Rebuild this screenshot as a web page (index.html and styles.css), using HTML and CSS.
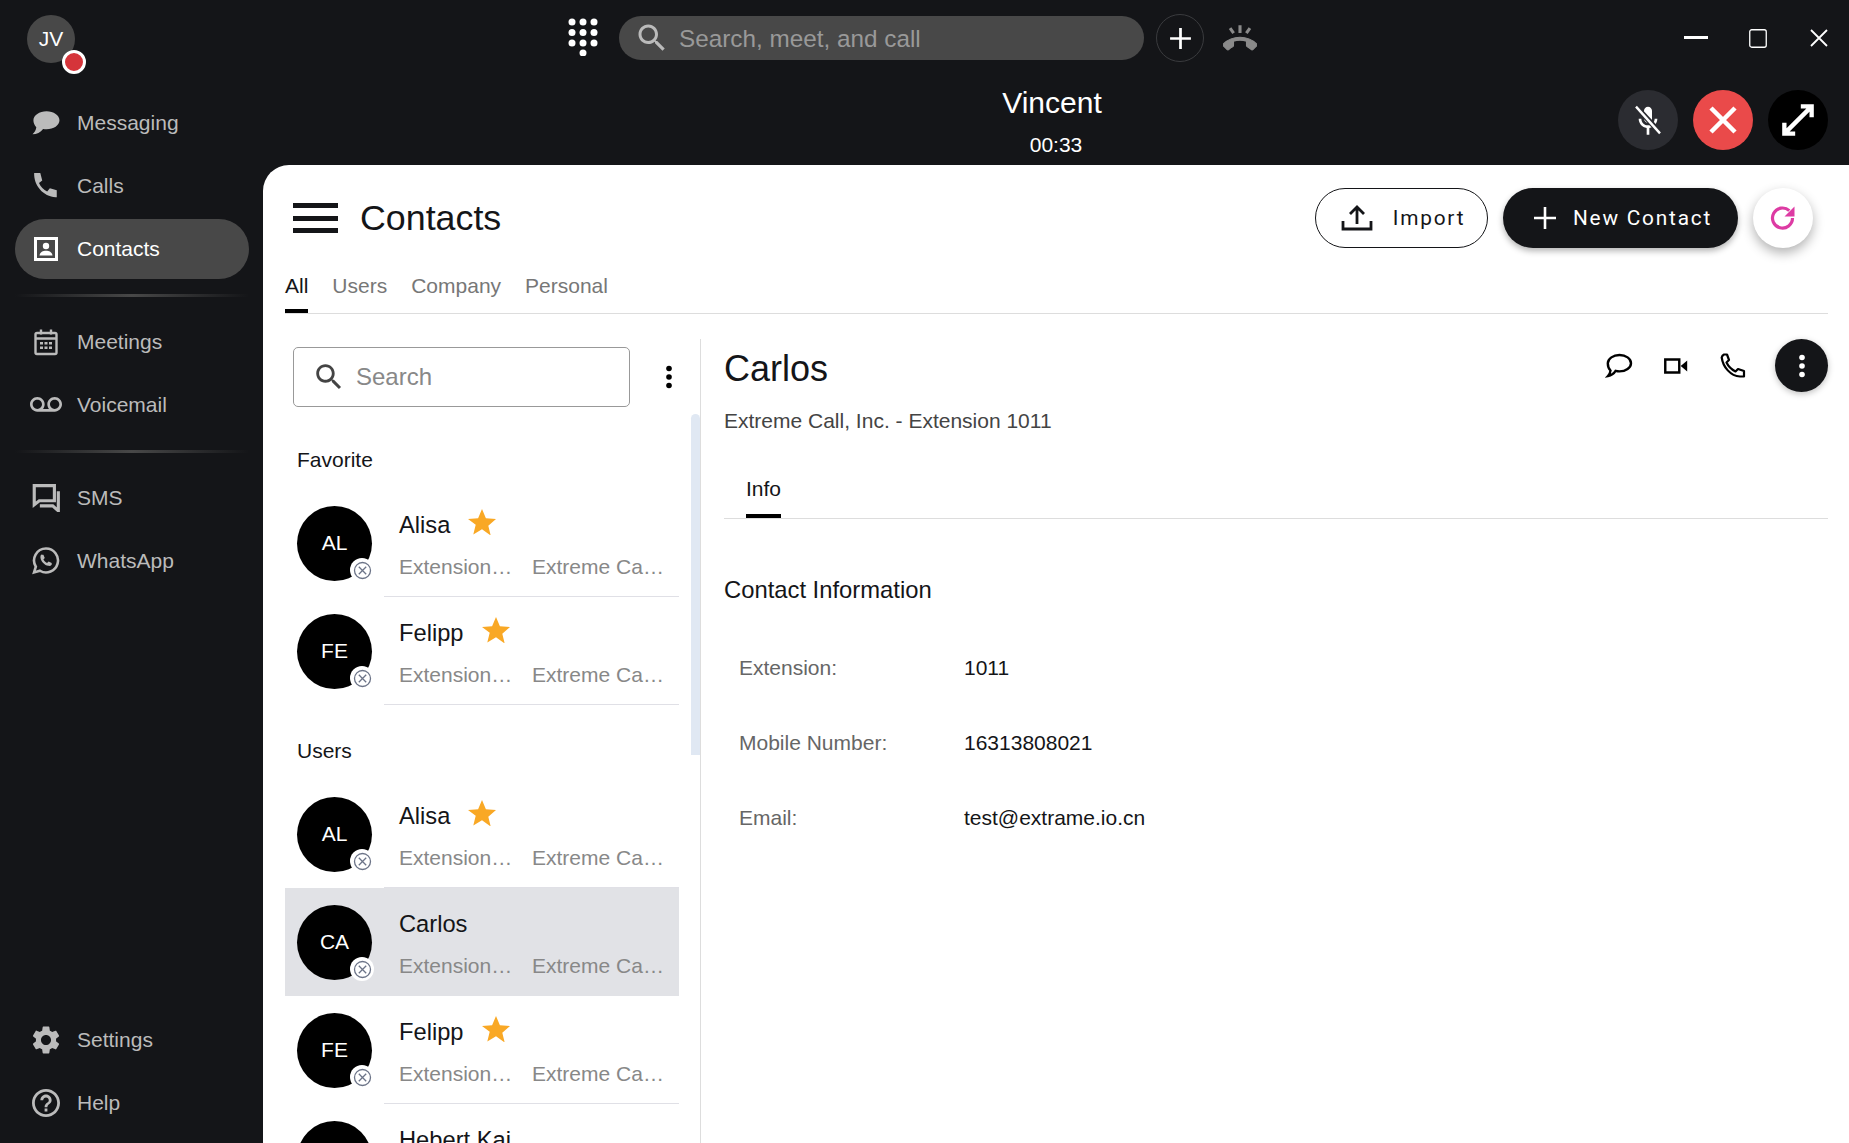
FILE: index.html
```html
<!DOCTYPE html>
<html lang="en">
<head>
<meta charset="UTF-8">
<meta name="viewport" content="width=device-width, initial-scale=1.0">
<title>Contacts</title>
<link rel="stylesheet" href="styles.css">
</head>
<body>
<svg class="sprite" xmlns="http://www.w3.org/2000/svg">
<symbol id="i-star" viewBox="0 0 28 26"><path d="M14 0l3.900 9.300 10.100.8-7.700 6.600 2.400 9.800L14 20.300l-8.700 5.200 2.400-9.800L0 10.100l10.100-.8z"/></symbol>
<symbol id="i-gone" viewBox="0 0 24 24"><circle cx="12" cy="12" r="12" fill="#fff"/><circle cx="12.500" cy="12.500" r="8" fill="#fff" stroke="#6c7488" stroke-width="1.300"/><path d="M8.800 8.800l7.400 7.400M16.200 8.800l-7.400 7.400" stroke="#6c7488" stroke-width="1.300"/></symbol>
<symbol id="i-search" viewBox="0 0 24 24"><path d="M15.500 14h-.79l-.28-.27C15.410 12.590 16 11.110 16 9.500 16 5.910 13.090 3 9.500 3S3 5.910 3 9.500 5.910 16 9.500 16c1.610 0 3.090-.59 4.230-1.570l.27.28v.79l5 4.990L20.490 19l-4.990-5zm-6 0C7.010 14 5 11.990 5 9.500S7.010 5 9.500 5 14 7.010 14 9.500 11.990 14 9.500 14z"/></symbol>
<symbol id="i-dots" viewBox="0 0 6 24"><circle cx="3" cy="3.500" r="2.800"/><circle cx="3" cy="12" r="2.800"/><circle cx="3" cy="20.500" r="2.800"/></symbol>
</svg>

<aside class="sidebar">
<div class="me">
<span class="me-initials">JV</span>
<span class="me-status"></span>
</div>
<nav class="nav-group nav-first">
<a class="nav-item"><svg viewBox="1.500 1.500 26 26"><path d="M15 3.500c6.600 0 12 3.700 12 8.400 0 4.600-5.400 8.400-12 8.400-1.100 0-2.200-.1-3.200-.3C9.500 23 5.800 25 2 25c1.700-1.500 3.300-3.900 3.500-6.500C3.900 16.800 2.800 14.500 2.800 12c0-4.700 5.600-8.500 12.200-8.500z" fill="currentColor"/></svg>Messaging</a>
<a class="nav-item"><svg viewBox="1.500 1.500 26 26"><path d="M3.500 2.500h5.700l1.800 6.800-3 2.500c1.500 3.400 4.300 6.300 7.600 7.700l2.500-3 6.400 1.900v6.600h-1C12 24.500 3 14 3.500 2.500z" fill="currentColor"/></svg>Calls</a>
<a class="nav-item nav-active"><svg viewBox="0 0 28 28"><rect x="3.500" y="3.500" width="21" height="21" fill="none" stroke="currentColor" stroke-width="3"/><circle cx="14" cy="11" r="3.200" fill="currentColor"/><path d="M7.500 20.500c.5-3.300 3.500-4.700 6.500-4.700s6 1.400 6.500 4.700z" fill="currentColor"/></svg>Contacts</a>
</nav>
<hr class="nav-line">
<nav class="nav-group">
<a class="nav-item"><svg viewBox="0 0 28 28"><rect x="3.500" y="5" width="21" height="21" rx="1.500" fill="none" stroke="currentColor" stroke-width="2.400"/><path d="M3.500 10.500h21M9 1.500v5M19 1.500v5" stroke="currentColor" stroke-width="2.400"/><path d="M8 14h3v2.500H8zM12.500 14h3v2.500h-3zM17 14h3v2.500h-3zM8 18.500h3V21H8zM12.500 18.500h3V21h-3zM17 18.500h3V21h-3z" fill="currentColor"/></svg>Meetings</a>
<a class="nav-item"><svg class="voicemail" viewBox="0 0 24 24"><path fill="currentColor" d="M18.500 6C15.460 6 13 8.460 13 11.500c0 1.330.47 2.550 1.260 3.500H9.740c.79-.95 1.260-2.170 1.260-3.500C11 8.460 8.540 6 5.500 6S0 8.460 0 11.500 2.460 17 5.500 17h13c3.040 0 5.500-2.460 5.500-5.500S21.540 6 18.500 6zm-13 9C3.570 15 2 13.430 2 11.500S3.570 8 5.500 8 9 9.570 9 11.500 7.430 15 5.500 15zm13 0c-1.930 0-3.500-1.570-3.500-3.500S16.570 8 18.500 8 22 9.570 22 11.500 20.430 15 18.500 15z"/></svg>Voicemail</a>
</nav>
<hr class="nav-line">
<nav class="nav-group">
<a class="nav-item"><svg viewBox="2 2 24 25"><path d="M3.500 3.500h18v13.500H8l-4.500 3.500z" fill="none" stroke="currentColor" stroke-width="2.800"/><path d="M25 8.500V26l-5-4.500H8.500" fill="none" stroke="currentColor" stroke-width="2.800"/></svg>SMS</a>
<a class="nav-item"><svg viewBox="1 1 27 27"><path d="M14.500 2.500a11.500 11.500 0 1 1-5.800 21.400L3 25.500l1.700-5.500A11.500 11.500 0 0 1 14.500 2.500z" fill="none" stroke="currentColor" stroke-width="2.500"/><path d="M10 8.500h2l1.300 3-1.300 1.500c.8 1.500 1.900 2.600 3.500 3.400l1.500-1.400 3 1.400v1.700c-.8 1-2 1.400-3.300 1.100-3.700-.9-6.800-3.900-7.500-7.700-.2-1.300.1-2.500.8-3.500z" fill="currentColor"/></svg>WhatsApp</a>
</nav>
<nav class="nav-group nav-bottom">
<a class="nav-item"><svg viewBox="2 2 20 20"><path fill="currentColor" d="M19.140 12.940c.04-.3.06-.61.06-.94 0-.32-.02-.64-.07-.94l2.030-1.580c.18-.14.23-.41.12-.61l-1.920-3.320c-.12-.22-.37-.29-.59-.22l-2.390.96c-.5-.38-1.030-.7-1.620-.94l-.36-2.540c-.04-.24-.24-.41-.48-.41h-3.840c-.24 0-.43.17-.47.41l-.36 2.540c-.59.24-1.130.57-1.620.94l-2.390-.96c-.22-.08-.47 0-.59.22L2.740 8.870c-.12.21-.08.47.12.61l2.030 1.580c-.05.3-.09.63-.09.94s.02.64.07.94l-2.030 1.580c-.18.14-.23.41-.12.61l1.920 3.320c.12.22.37.29.59.22l2.390-.96c.5.38 1.030.7 1.620.94l.36 2.540c.05.24.24.41.48.41h3.840c.24 0 .44-.17.47-.41l.36-2.540c.59-.24 1.130-.56 1.620-.94l2.390.96c.22.08.47 0 .59-.22l1.920-3.320c.12-.22.07-.47-.12-.61l-2.010-1.580zM12 15.600c-1.980 0-3.600-1.620-3.600-3.600s1.620-3.600 3.600-3.600 3.600 1.620 3.600 3.600-1.620 3.600-3.600 3.600z"/></svg>Settings</a>
<a class="nav-item"><svg viewBox="2 2 20 20"><path fill="currentColor" d="M11 18h2v-2h-2v2zm1-16C6.480 2 2 6.480 2 12s4.480 10 10 10 10-4.480 10-10S17.520 2 12 2zm0 18c-4.410 0-8-3.590-8-8s3.590-8 8-8 8 3.590 8 8-3.590 8-8 8zm0-14c-2.210 0-4 1.790-4 4h2c0-1.100.9-2 2-2s2 .9 2 2c0 2-3 1.750-3 5h2c0-2.250 3-2.500 3-5 0-2.210-1.790-4-4-4z"/></svg>Help</a>
</nav>
</aside>

<main class="main">
<header class="topbar">
<div class="tools">
<svg class="dialpad" viewBox="0 0 30 38"><g fill="#fff"><circle cx="4" cy="4" r="3.500"/><circle cx="15" cy="4" r="3.500"/><circle cx="26" cy="4" r="3.500"/><circle cx="4" cy="14.500" r="3.500"/><circle cx="15" cy="14.500" r="3.500"/><circle cx="26" cy="14.500" r="3.500"/><circle cx="4" cy="25" r="3.500"/><circle cx="15" cy="25" r="3.500"/><circle cx="26" cy="25" r="3.500"/><circle cx="15" cy="35" r="3.500"/></g></svg>
<div class="global-search">
<svg class="global-search-icon"><use href="#i-search"/></svg>
<span class="global-search-text">Search, meet, and call</span>
</div>
<button class="round-add"><svg viewBox="0 0 24 24"><path d="M12 2v20M2 12h20" stroke="#fff" stroke-width="2.600"/></svg></button>
<svg class="hangup-ring" viewBox="0 0 24 18"><path transform="translate(0 1.500)" fill="#8a8a8a" stroke="#8a8a8a" stroke-width=".8" d="M12 9c-1.600 0-3.150.25-4.600.72v3.100c0 .39-.23.74-.56.9-.98.49-1.870 1.120-2.660 1.850-.18.18-.43.28-.7.28-.28 0-.53-.11-.71-.29L.29 13.080c-.18-.17-.29-.42-.29-.7 0-.28.11-.53.29-.71C3.340 8.780 7.460 7 12 7s8.660 1.780 11.710 4.670c.18.18.29.43.29.71 0 .28-.11.53-.29.71l-2.480 2.480c-.18.18-.43.29-.71.29-.27 0-.52-.11-.7-.28-.79-.74-1.690-1.360-2.670-1.850-.33-.16-.56-.5-.56-.9v-3.100C15.150 9.250 13.600 9 12 9z"/><path d="M12 0v5.500M5 2l2.500 3.500M19 2l-2.500 3.500" stroke="#8a8a8a" stroke-width="2.200"/></svg>
</div>
<div class="window-btns">
<svg class="win-min" viewBox="0 0 24 3"><path d="M0 1.500h24" stroke="#fff" stroke-width="3"/></svg>
<svg class="win-max" viewBox="0 0 18 19"><rect x=".75" y=".75" width="16.500" height="17.500" rx="2" fill="none" stroke="#fff" stroke-width="1.300"/></svg>
<svg class="win-close" viewBox="0 0 18 18"><path d="M1 1l16 16M17 1L1 17" stroke="#fff" stroke-width="1.800"/></svg>
</div>
<div class="call-row">
<div class="call-info">
<div class="call-name">Vincent</div>
<div class="call-time">00:33</div>
</div>
<div class="call-actions">
<button class="call-btn call-mute"><svg viewBox="0 0 24 24"><path fill="#fff" d="M12 14c1.660 0 3-1.340 3-3V5c0-1.660-1.340-3-3-3S9 3.340 9 5v6c0 1.660 1.340 3 3 3zm5-3c0 2.760-2.240 5-5 5s-5-2.240-5-5H5c0 3.530 2.610 6.430 6 6.920V23h2v-5.080c3.390-.49 6-3.390 6-6.920h-2z"/><path d="M3.500 2.500l17.500 19" stroke="#2b2c31" stroke-width="4"/><path d="M3 2l18 20" stroke="#fff" stroke-width="1.800"/></svg></button>
<button class="call-btn call-end"><svg viewBox="0 0 24 24"><path d="M3 3l18 18M21 3L3 21" stroke="#fff" stroke-width="3.400"/></svg></button>
<button class="call-btn call-expand"><svg viewBox="0 0 34 34"><path d="M20 2.500h11.500V14M31.500 2.500L2.500 31.500M2.500 20v11.500H14" fill="none" stroke="#fff" stroke-width="4.600"/></svg></button>
</div>
</div>
</header>

<section class="panel">
<div class="panel-head">
<div class="burger"><span></span><span></span><span></span></div>
<h1 class="panel-title">Contacts</h1>
<button class="pill pill-outline"><svg viewBox="0 0 32 28"><path d="M2 17v8h28v-8M16 20V3M9 10l7-7 7 7" fill="none" stroke="#141518" stroke-width="2.800"/></svg>Import</button>
<button class="pill pill-dark"><svg viewBox="0 0 24 24"><path d="M12 1v22M1 12h22" stroke="#fff" stroke-width="2.600"/></svg>New Contact</button>
<button class="refresh"><svg viewBox="0 0 28 28"><path d="M23.500 14a10 10 0 1 1-3.200-7.300" fill="none" stroke="#dd3ba3" stroke-width="3.200"/><path d="M25.500 2.500v10h-10z" fill="#dd3ba3"/></svg></button>
</div>
<div class="tabs">
<a class="tab tab-active">All</a>
<a class="tab">Users</a>
<a class="tab">Company</a>
<a class="tab">Personal</a>
</div>

<div class="panel-body">
<div class="list-col">
<div class="list-tools">
<div class="list-search">
<svg><use href="#i-search"/></svg>
<span>Search</span>
</div>
<svg class="list-more"><use href="#i-dots"/></svg>
</div>
<div class="scroll-thumb"></div>
<div class="list">
<div class="group-label">Favorite</div>
<div class="row">
<div class="avatar">AL<svg class="avatar-badge"><use href="#i-gone"/></svg></div>
<div class="row-body">
<div class="row-name">Alisa<svg class="star"><use href="#i-star"/></svg></div>
<div class="row-sub"><span class="sub-ext">Extension 1012</span><span class="sub-org">Extreme Call, Inc.</span></div>
</div>
</div>
<div class="row">
<div class="avatar">FE<svg class="avatar-badge"><use href="#i-gone"/></svg></div>
<div class="row-body">
<div class="row-name">Felipp<svg class="star"><use href="#i-star"/></svg></div>
<div class="row-sub"><span class="sub-ext">Extension 1013</span><span class="sub-org">Extreme Call, Inc.</span></div>
</div>
</div>
<div class="group-label group-next">Users</div>
<div class="row">
<div class="avatar">AL<svg class="avatar-badge"><use href="#i-gone"/></svg></div>
<div class="row-body">
<div class="row-name">Alisa<svg class="star"><use href="#i-star"/></svg></div>
<div class="row-sub"><span class="sub-ext">Extension 1012</span><span class="sub-org">Extreme Call, Inc.</span></div>
</div>
</div>
<div class="row row-selected">
<div class="avatar">CA<svg class="avatar-badge"><use href="#i-gone"/></svg></div>
<div class="row-body">
<div class="row-name">Carlos</div>
<div class="row-sub"><span class="sub-ext">Extension 1011</span><span class="sub-org">Extreme Call, Inc.</span></div>
</div>
</div>
<div class="row">
<div class="avatar">FE<svg class="avatar-badge"><use href="#i-gone"/></svg></div>
<div class="row-body">
<div class="row-name">Felipp<svg class="star"><use href="#i-star"/></svg></div>
<div class="row-sub"><span class="sub-ext">Extension 1013</span><span class="sub-org">Extreme Call, Inc.</span></div>
</div>
</div>
<div class="row">
<div class="avatar">HK<svg class="avatar-badge"><use href="#i-gone"/></svg></div>
<div class="row-body">
<div class="row-name">Hebert Kai</div>
<div class="row-sub"><span class="sub-ext">Extension 1014</span><span class="sub-org">Extreme Call, Inc.</span></div>
</div>
</div>
</div>
</div>

<div class="detail">
<div class="detail-head">
<h2 class="detail-name">Carlos</h2>
<div class="detail-actions">
<svg viewBox="0 0 28 26"><path d="M14.500 2c6.300 0 11.500 3.600 11.500 8.200 0 4.500-5.200 8.200-11.500 8.200-1.400 0-2.700-.2-3.900-.5C8.800 20.800 6.500 22.500 3 23c1.200-1.300 2.300-3.200 2.500-5.500C3.600 15.600 2.800 13 2.800 10.200 3 5.600 8.200 2 14.500 2z" fill="none" stroke="#000" stroke-width="2.400"/></svg>
<svg viewBox="-2 -1 30 20"><path d="M1.500 2h15v14h-15z" fill="none" stroke="#000" stroke-width="2.600"/><path d="M18 9l7-6v12z" fill="#000"/></svg>
<svg viewBox="0 0 26 26"><path d="M4 1.500h3l2 5.500-2.500 2.500c1.800 3.800 5 7 9 9l2.500-2.500 6 2v5.500h-4C10.500 23 3 14 1.700 4.500 2 3 3 2 4 1.500z" fill="none" stroke="#000" stroke-width="2.200" stroke-linejoin="round"/></svg>
<button class="detail-more"><svg><use href="#i-dots"/></svg></button>
</div>
</div>
<div class="detail-sub">Extreme Call, Inc. - Extension 1011</div>
<div class="detail-tabs"><a class="detail-tab">Info</a></div>
<h3 class="info-title">Contact Information</h3>
<div class="field"><span class="field-label">Extension:</span><span>1011</span></div>
<div class="field"><span class="field-label">Mobile Number:</span><span>16313808021</span></div>
<div class="field"><span class="field-label">Email:</span><span>test@extrame.io.cn</span></div>
</div>
</div>
</section>
</main>
</body>
</html>
```

FILE: styles.css
```css
* {
box-sizing: border-box;
}
html, body {
height: 100%;
}
body {
margin: 0;
display: flex;
overflow: hidden;
background-color: #141518;
font-family: "Liberation Sans", Arial, sans-serif;
font-size: 21px;
color: #141518;
}
button {
font-family: inherit;
border: none;
padding: 0;
cursor: pointer;
}
.sprite {
display: none;
}

/* left navigation */
.sidebar {
width: 263px;
flex-shrink: 0;
height: 100%;
display: flex;
flex-direction: column;
color: #bbb;
}
.me {
position: relative;
width: 48px;
height: 48px;
margin: 15px 0 0 27px;
border-radius: 50%;
background-color: #484848;
color: #fff;
display: flex;
align-items: center;
justify-content: center;
}
.me-status {
position: absolute;
left: 35px;
top: 35px;
width: 24px;
height: 24px;
border-radius: 50%;
background-color: #d5343a;
border: 3px solid #fff;
}
.nav-group {
display: flex;
flex-direction: column;
gap: 3px;
}
.nav-first {
margin-top: 30px;
}
.nav-bottom {
margin-top: auto;
margin-bottom: 10px;
}
.nav-item {
width: 234px;
height: 60px;
margin-left: 15px;
padding-left: 17px;
display: flex;
align-items: center;
gap: 17px;
border-radius: 30px;
}
.nav-item svg {
width: 28px;
height: 28px;
flex-shrink: 0;
}
.nav-item .voicemail {
width: 32px;
height: 32px;
margin-left: -2px;
margin-right: -2px;
}
.nav-active {
background-color: #484848;
color: #fff;
}
.nav-line {
width: 234px;
height: 3px;
margin: 15px 0 15px 15px;
border: none;
background: linear-gradient(90deg, transparent, #484848 50%, transparent);
}

/* top bar */
.main {
flex: 1;
min-width: 0;
display: flex;
flex-direction: column;
}
.topbar {
height: 165px;
flex-shrink: 0;
display: grid;
grid-template-columns: 1fr auto;
grid-template-rows: 76px 1fr;
color: #fff;
}
.tools {
display: flex;
align-items: center;
padding-left: 305px;
}
.dialpad {
width: 30px;
height: 38px;
margin-bottom: 3px;
}
.global-search {
width: 525px;
height: 44px;
margin-left: 21px;
padding-left: 15px;
display: flex;
align-items: center;
gap: 9px;
border-radius: 22px;
background-color: #484848;
color: #999;
font-size: 24.3px;
}
.global-search-text {
padding-top: 2px;
}
.global-search-icon {
width: 36px;
height: 36px;
fill: #bbb;
}
.round-add {
width: 48px;
height: 48px;
margin-left: 12px;
border-radius: 50%;
background: transparent;
border: 1px solid #3a3b3e;
display: flex;
align-items: center;
justify-content: center;
}
.round-add svg {
width: 25px;
height: 25px;
}
.hangup-ring {
width: 34px;
height: 26px;
margin-left: 19px;
}
.window-btns {
display: flex;
align-items: center;
padding-right: 21px;
}
.win-min {
width: 24px;
height: 3px;
margin-bottom: 2px;
}
.win-max {
width: 18px;
height: 19px;
margin: 0 43px 0 41px;
}
.win-close {
width: 18px;
height: 18px;
}
.call-row {
grid-column: 1 / 3;
display: grid;
grid-template-columns: 1fr auto 1fr;
}
.call-info {
grid-column: 2;
text-align: center;
}
.call-name {
font-size: 30px;
line-height: 36px;
margin-top: 9px;
margin-right: 8px;
}
.call-time {
margin-top: 12px;
line-height: 24px;
}
.call-actions {
grid-column: 3;
display: flex;
justify-content: flex-end;
gap: 15px;
margin-top: 14px;
padding-right: 21px;
}
.call-btn {
width: 60px;
height: 60px;
border-radius: 50%;
display: flex;
align-items: center;
justify-content: center;
}
.call-btn svg {
width: 32px;
height: 32px;
}
.call-mute {
background-color: #2b2c31;
}
.call-end {
background-color: #ea4a4a;
}
.call-expand {
background-color: #000;
}

/* white panel */
.panel {
flex: 1;
min-height: 0;
display: flex;
flex-direction: column;
padding: 23px 21px 0 22px;
background-color: #fff;
border-top-left-radius: 26px;
overflow: hidden;
}
.panel-head {
height: 60px;
flex-shrink: 0;
display: flex;
align-items: center;
padding: 0 15px 0 8px;
}
.burger {
width: 45px;
height: 30px;
display: flex;
flex-direction: column;
justify-content: space-between;
}
.burger span {
height: 5px;
background-color: #141518;
}
.panel-title {
margin: 0 auto 0 22px;
font-size: 35.8px;
font-weight: normal;
}
.pill {
height: 60px;
border-radius: 30px;
display: flex;
align-items: center;
justify-content: center;
font-family: Roboto, sans-serif;
font-size: 20.8px;
letter-spacing: 1.8px;
}
.pill-outline {
width: 173px;
padding-left: 3px;
gap: 20px;
background: #fff;
border: 1px solid #141518;
color: #141518;
}
.pill-outline svg {
width: 32px;
height: 28px;
}
.pill-dark {
width: 235px;
margin-left: 15px;
padding-left: 4px;
gap: 16px;
background-color: #141518;
color: #fff;
box-shadow: 0 3px 6px rgba(0, 0, 0, 0.3);
}
.pill-dark svg {
width: 24px;
height: 24px;
}
.refresh {
width: 60px;
height: 60px;
margin-left: 15px;
border-radius: 50%;
background: #fff;
box-shadow: 0 5px 12px rgba(0, 0, 0, 0.3);
display: flex;
align-items: center;
justify-content: center;
}
.refresh svg {
width: 28px;
height: 28px;
}
.tabs {
height: 66px;
flex-shrink: 0;
display: flex;
align-items: flex-end;
gap: 24px;
border-bottom: 1px solid #ddd;
color: #777;
}
.tab {
height: 49px;
padding-top: 10px;
}
.tab-active {
color: #141518;
border-bottom: 4px solid #000;
}

.panel-body {
flex: 1;
min-height: 0;
display: flex;
margin-top: 25px;
}
.list-col {
position: relative;
width: 416px;
flex-shrink: 0;
border-right: 1px solid #ddd;
}
.list-tools {
display: flex;
align-items: center;
padding: 8px 0 0 8px;
}
.list-search {
width: 337px;
height: 60px;
padding-left: 18px;
display: flex;
align-items: center;
gap: 10px;
border: 1px solid #999;
border-radius: 5px;
color: #888;
font-size: 24px;
}
.list-search svg {
width: 34px;
height: 34px;
fill: #444;
}
.list-more {
width: 6px;
height: 24px;
margin-left: 36px;
}
.scroll-thumb {
position: absolute;
right: 0;
top: 75px;
width: 9px;
height: 341px;
border-radius: 5px 5px 0 0;
background-color: #e0e8f3;
}
.list {
width: 394px;
padding-top: 22px;
}
.group-label {
height: 60px;
line-height: 62px;
padding-left: 12px;
}
.group-next {
margin-top: 15px;
}
.row {
height: 108px;
display: flex;
align-items: center;
padding-left: 12px;
}
.row-selected {
background-color: #e1e2e6;
}
.avatar {
position: relative;
width: 75px;
height: 75px;
flex-shrink: 0;
border-radius: 50%;
background-color: #000;
color: #fff;
display: flex;
align-items: center;
justify-content: center;
padding-bottom: 1px;
}
.avatar-badge {
position: absolute;
right: -2px;
bottom: -1px;
width: 24px;
height: 24px;
}
.row-body {
flex: 1;
min-width: 0;
height: 100%;
margin-left: 12px;
padding: 20px 0 0 15px;
border-bottom: 1px solid #e0e0e6;
}
.row-selected .row-body {
border-bottom-color: transparent;
}
.row-name {
height: 32px;
display: flex;
align-items: center;
gap: 18px;
font-size: 23.7px;
color: #141518;
}
.star {
width: 28px;
height: 26px;
margin-top: -6px;
fill: #f9a825;
}
.row-sub {
display: flex;
gap: 19px;
margin-top: 14px;
color: #888;
}
.sub-ext,
.sub-org {
overflow: hidden;
white-space: nowrap;
text-overflow: ellipsis;
}
.sub-ext {
width: 114px;
}
.sub-org {
width: 132px;
}

/* contact detail */
.detail {
flex: 1;
min-width: 0;
padding-left: 23px;
}
.detail-head {
height: 53px;
display: flex;
align-items: center;
justify-content: space-between;
}
.detail-name {
margin: 0;
padding-top: 7px;
font-size: 36px;
font-weight: normal;
}
.detail-actions {
display: flex;
align-items: center;
}
.detail-actions > svg {
width: 28px;
height: 26px;
margin-right: 29px;
}
.detail-more {
width: 53px;
height: 53px;
margin-left: -1px;
border-radius: 50%;
background-color: #141518;
box-shadow: 0 2px 6px rgba(0, 0, 0, 0.25);
display: flex;
align-items: center;
justify-content: center;
}
.detail-more svg {
width: 6px;
height: 24px;
fill: #fff;
}
.detail-sub {
margin-top: 16px;
line-height: 26px;
color: #444;
}
.detail-tabs {
height: 85px;
display: flex;
align-items: flex-end;
padding-left: 22px;
border-bottom: 1px solid #ddd;
}
.detail-tab {
height: 49px;
padding-top: 8px;
border-bottom: 4px solid #000;
}
.info-title {
margin: 57px 0 26px;
font-size: 23.8px;
font-weight: normal;
line-height: 28px;
}
.field {
height: 75px;
padding-left: 15px;
display: flex;
align-items: center;
}
.field-label {
width: 225px;
color: #666;
}
```
